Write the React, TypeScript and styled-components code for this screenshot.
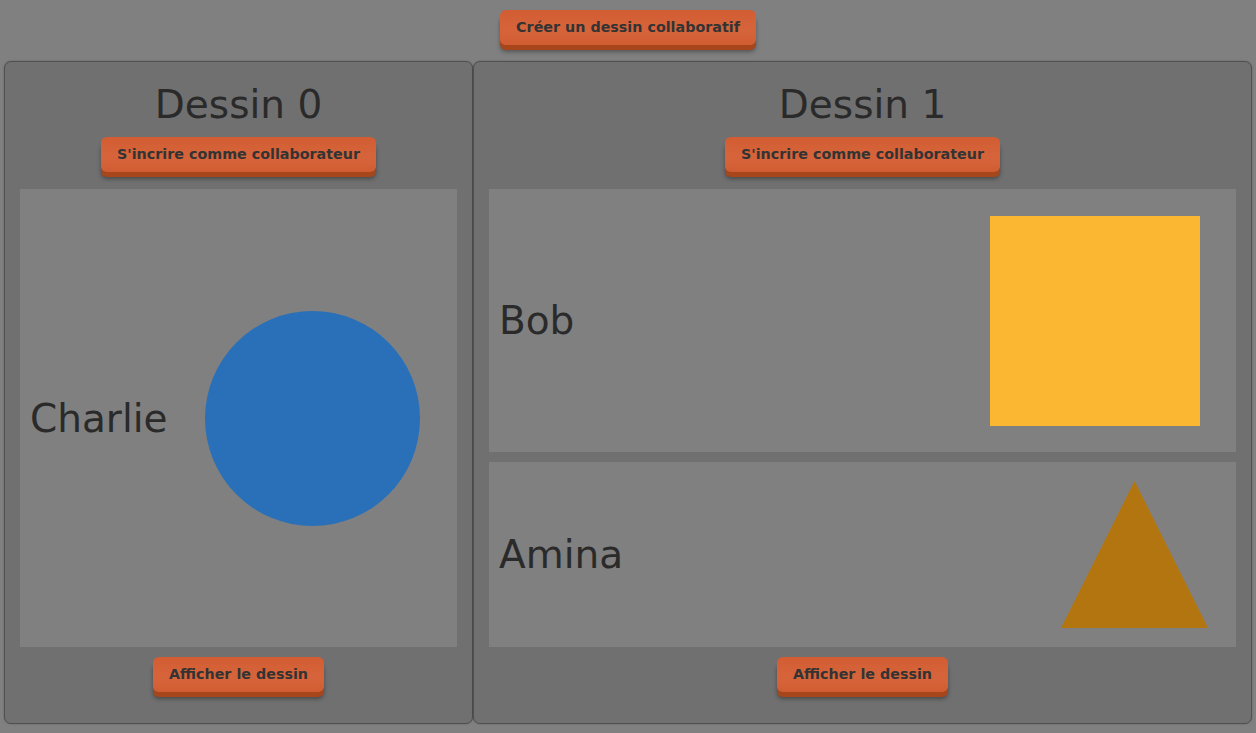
import React from "react";
import styled, { createGlobalStyle } from "styled-components";

const GlobalStyle = createGlobalStyle`
  html, body {
    margin: 0;
    padding: 0;
    background: #808080;
    font-family: "DejaVu Sans", Verdana, sans-serif;
  }
`;

const Page = styled.div`
  display: flex;
  flex-direction: column;
  align-items: center;
  padding-top: 10px;
  height: 733px;
  box-sizing: border-box;
`;

const Button = styled.button`
  font-family: "DejaVu Sans", Verdana, sans-serif;
  font-weight: bold;
  font-size: 14.3px;
  line-height: 17px;
  color: #333;
  height: 35px;
  padding: 0 16px;
  border: none;
  border-radius: 6px;
  background: linear-gradient(#d35d33, #d6643b 60%, #d15c32);
  box-shadow: 0 5px 0 #a8461b, 0 7px 4px rgba(0, 0, 0, 0.35);
  cursor: pointer;
  white-space: nowrap;
`;

const TopButton = styled(Button)`
  margin-bottom: 16px;
`;

const Boards = styled.div`
  display: flex;
  align-self: stretch;
  padding: 0 4px;
`;

const Panel = styled.section<{ $width?: number }>`
  ${(p) => (p.$width ? `flex: 0 0 ${p.$width}px;` : "flex: 1;")}
  box-sizing: border-box;
  height: 663px;
  display: flex;
  flex-direction: column;
  align-items: center;
  padding: 21px 15px 0;
  background: #707070;
  border: 1px solid #505050;
  border-radius: 7px;
  box-shadow: 0 0 2px rgba(0, 0, 0, 0.25);
`;

const Title = styled.h2`
  margin: 0 0 10px;
  font-size: 39px;
  line-height: 44px;
  font-weight: normal;
  color: #2a2a2a;
`;

const Canvas = styled.div`
  align-self: stretch;
  height: 458px;
  margin: 17px 0 10px;
  display: flex;
  flex-direction: column;
  gap: 10px;
`;

const Row = styled.div<{ $height?: number }>`
  ${(p) => (p.$height ? `height: ${p.$height}px;` : "flex: 1;")}
  background: #808080;
  display: flex;
  align-items: center;
  justify-content: space-between;
  padding: 0 0 0 10px;
`;

const Name = styled.span`
  font-size: 39px;
  color: #2a2a2a;
`;

const Shape = styled.svg<{ $right: number }>`
  display: block;
  margin-right: ${(p) => p.$right}px;
`;

export default function App() {
  return (
    <>
      <GlobalStyle />
      <Page>
        <TopButton>Créer un dessin collaboratif</TopButton>
        <Boards>
          <Panel $width={469}>
            <Title>Dessin 0</Title>
            <Button>S'incrire comme collaborateur</Button>
            <Canvas>
              <Row>
                <Name>Charlie</Name>
                <Shape $right={37} width="215" height="215" viewBox="0 0 215 215">
                  <circle cx="107.5" cy="107.5" r="107.5" fill="#2970b8" />
                </Shape>
              </Row>
            </Canvas>
            <Button>Afficher le dessin</Button>
          </Panel>
          <Panel>
            <Title>Dessin 1</Title>
            <Button>S'incrire comme collaborateur</Button>
            <Canvas>
              <Row $height={263}>
                <Name>Bob</Name>
                <Shape $right={36} width="210" height="210" viewBox="0 0 210 210">
                  <rect x="0" y="0" width="210" height="210" fill="#fbb732" />
                </Shape>
              </Row>
              <Row>
                <Name>Amina</Name>
                <Shape $right={28} width="147" height="147" viewBox="0 0 147 147">
                  <polygon points="73.5,0 147,147 0,147" fill="#b3750f" />
                </Shape>
              </Row>
            </Canvas>
            <Button>Afficher le dessin</Button>
          </Panel>
        </Boards>
      </Page>
    </>
  );
}
